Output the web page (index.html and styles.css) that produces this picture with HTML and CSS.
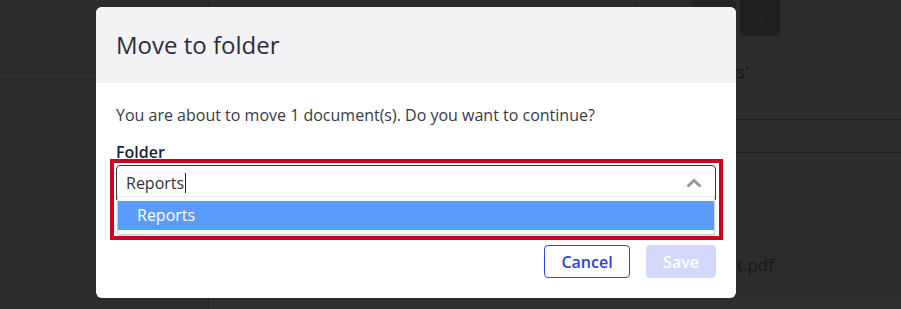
FILE: index.html
```html
<!DOCTYPE html>
<html>
<head>
<meta charset="utf-8">
<link rel="stylesheet" href="styles.css">
</head>
<body>
<div class="page">
  <aside class="sidebar">
    <div class="sb-top"></div>
    <div class="sb-row"></div>
    <div class="sb-fill"><div class="sb-rule"></div></div>
  </aside>
  <main class="main">
    <div class="toolbar">
      <div class="tb-space"></div>
      <div class="tb-cell"></div>
      <div class="tb-dark"></div>
      <div class="tb-btn">&#8250;</div>
    </div>
    <div class="title-row"><span class="bg-text">Documents in 'Reports'</span></div>
    <div class="table-head"></div>
    <div class="table-body">
      <div class="file-row"><span class="bg-text">Report.pdf</span></div>
    </div>
    <div class="footer"></div>
  </main>
</div>

<div class="modal">
  <div class="modal-header">
    <h2 class="modal-title">Move to folder</h2>
  </div>
  <div class="modal-body">
    <p class="message">You are about to move 1 document(s). Do you want to continue?</p>
    <div class="label">Folder</div>
    <div class="highlight">
      <div class="combo">
        <span class="combo-value">Reports</span>
        <svg class="chevron" width="16" height="10" viewBox="0 0 16 10"><path d="M1.5 8.5 L8 2.5 L14.5 8.5" fill="none" stroke="#9a9a9a" stroke-width="3"/></svg>
      </div>
      <div class="menu">
        <div class="menu-item">Reports</div>
      </div>
    </div>
    <div class="actions">
      <button class="btn btn-cancel">Cancel</button>
      <button class="btn btn-save">Save</button>
    </div>
  </div>
</div>
</body>
</html>
```
FILE: styles.css
```css
* { box-sizing: border-box; }
html, body { margin: 0; padding: 0; }
body {
  width: 901px;
  height: 309px;
  overflow: hidden;
  background: #2c2c2c;
  font-family: "Open Sans", "Noto Sans", sans-serif;
  position: relative;
}
.page {
  display: flex;
  height: 309px;
}
.sidebar {
  width: 209px;
  border-right: 1px solid #222226;
  display: flex;
  flex-direction: column;
}
.sb-top { height: 50px; border-bottom: 1px solid #272727; }
.sb-row { height: 23px; border-bottom: 1px solid #272727; }
.sb-fill { flex: 1; display: flex; justify-content: flex-end; }
.sb-rule { width: 1px; margin-right: 9px; background: #292929; }
.main {
  flex: 1;
  display: flex;
  flex-direction: column;
}
.toolbar {
  display: flex;
  height: 36px;
  align-items: flex-start;
}
.tb-space { width: 427px; height: 8px; border-right: 1px solid #222; }
.tb-cell { width: 56px; }
.tb-dark { width: 44px; height: 8px; background: #232323; }
.tb-btn {
  margin-left: 4px;
  width: 40px;
  height: 36px;
  background: #202020;
  border-radius: 0 0 4px 4px;
  color: #272727;
  font-size: 22px;
  line-height: 30px;
  text-align: center;
}
.title-row {
  height: 84px;
  border-bottom: 1px solid #1c1b25;
  padding-top: 24px;
}
.bg-text {
  display: block;
  width: 540px;
  text-align: right;
  color: #181818;
  font-size: 17px;
  line-height: 24px;
}
.table-head {
  height: 33px;
  border-bottom: 1px solid #1c1b25;
}
.table-body {
  height: 142px;
  border-bottom: 1px solid #262626;
  padding-top: 100px;
}
.file-row .bg-text { width: 565px; font-size: 17px; }
.footer { flex: 1; background: #2e2e2e; }

/* modal */
.modal {
  position: absolute;
  left: 96px;
  top: 7px;
  width: 640px;
  height: 291px;
  background: #ffffff;
  border-radius: 6px;
  overflow: hidden;
}
.modal-header {
  height: 76px;
  background: #f3f3f5;
  display: flex;
  align-items: center;
  padding: 0 20px;
}
.modal-title {
  margin: 0;
  font-size: 24px;
  font-weight: 400;
  color: #2b2e40;
  line-height: 32px;
}
.modal-body {
  padding: 21px 20px 20px 20px;
}
.message {
  margin: 0;
  font-size: 16px;
  line-height: 22px;
  color: #383a48;
}
.label {
  margin-top: 16px;
  font-size: 16px;
  font-weight: 600;
  line-height: 20px;
  color: #1b1e3a;
}
.highlight {
  margin: -3px -7px 0 -6px;
  border: 4px solid #d0021f;
  padding: 2px 3px 1px 2px;
}
.combo {
  height: 35px;
  border: 1px solid #3a3a3a;
  border-radius: 4px 4px 0 0;
  display: flex;
  align-items: center;
  padding: 0 13px 0 9px;
}
.combo-value {
  font-size: 16px;
  color: #33343f;
  line-height: 20px;
  padding-right: 1px;
  border-right: 1px solid #222;
}
.chevron { margin-left: auto; }
.menu {
  position: relative;
  margin: -4px 1px 0 1px;
  background: #fff;
  border: 1px solid #cfcfcf;
  border-top-color: #f2f2f2;
  border-radius: 0 0 3px 3px;
  box-shadow: 0 1px 2px rgba(0,0,0,0.12);
  padding: 4px 0 4px 0;
}
.menu-item {
  height: 29px;
  background: #5a9bfc;
  color: #ffffff;
  font-size: 16px;
  line-height: 28px;
  padding-left: 19px;
}
.actions {
  display: flex;
  justify-content: flex-end;
  gap: 16px;
  margin-top: 5px;
}
.btn {
  height: 33px;
  border-radius: 4px;
  font-family: "Open Sans", "Noto Sans", sans-serif;
  font-size: 16px;
  font-weight: 600;
  cursor: pointer;
}
.btn-cancel {
  width: 86px;
  background: #fff;
  border: 1px solid #2c45e8;
  color: #2d43d8;
}
.btn-save {
  width: 70px;
  background: #d4d8fb;
  border: none;
  color: #ffffff;
}
```
